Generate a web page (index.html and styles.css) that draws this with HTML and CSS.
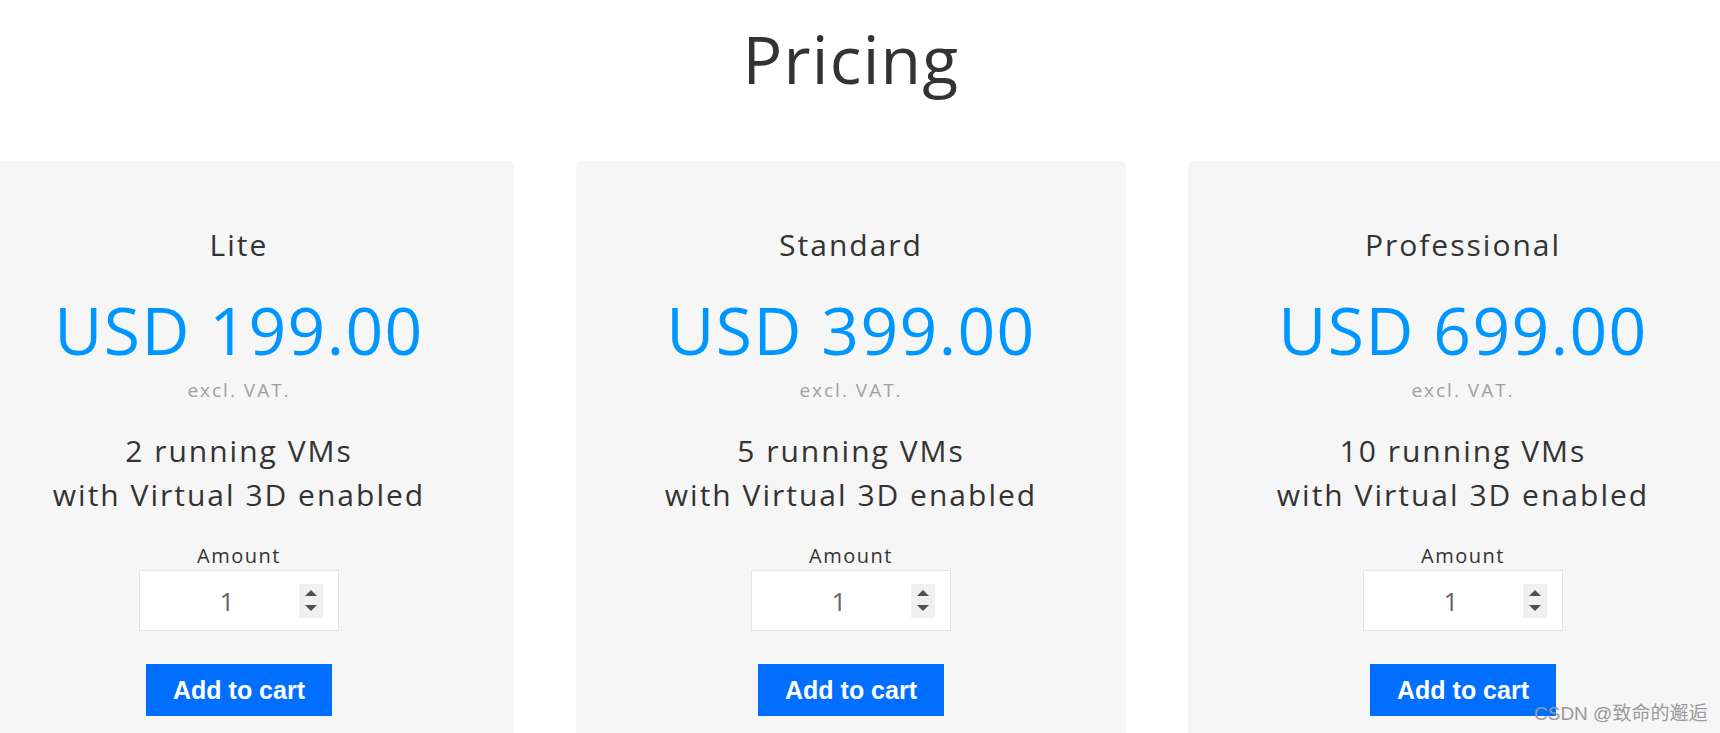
FILE: index.html
```html
<!DOCTYPE html>
<html lang="en">
<head>
<meta charset="utf-8">
<title>Pricing</title>
<link rel="stylesheet" href="styles.css">
</head>
<body>
<div class="page">
  <h1 class="page-title">Pricing</h1>
  <div class="plans">
    <section class="plan">
      <h2 class="plan-name">Lite</h2>
      <div class="plan-price">USD 199.00</div>
      <div class="plan-vat">excl. VAT.</div>
      <p class="plan-features">2 running VMs<br>with Virtual 3D enabled</p>
      <label class="amount-label">Amount</label>
      <div class="qty">
        <input class="qty-input" type="text" value="1">
        <span class="spin"><span class="tri tri-up"></span><span class="tri tri-down"></span></span>
      </div>
      <button class="cart-btn" type="button">Add to cart</button>
    </section>
    <section class="plan">
      <h2 class="plan-name">Standard</h2>
      <div class="plan-price">USD 399.00</div>
      <div class="plan-vat">excl. VAT.</div>
      <p class="plan-features">5 running VMs<br>with Virtual 3D enabled</p>
      <label class="amount-label">Amount</label>
      <div class="qty">
        <input class="qty-input" type="text" value="1">
        <span class="spin"><span class="tri tri-up"></span><span class="tri tri-down"></span></span>
      </div>
      <button class="cart-btn" type="button">Add to cart</button>
    </section>
    <section class="plan">
      <h2 class="plan-name">Professional</h2>
      <div class="plan-price">USD 699.00</div>
      <div class="plan-vat">excl. VAT.</div>
      <p class="plan-features">10 running VMs<br>with Virtual 3D enabled</p>
      <label class="amount-label">Amount</label>
      <div class="qty">
        <input class="qty-input" type="text" value="1">
        <span class="spin"><span class="tri tri-up"></span><span class="tri tri-down"></span></span>
      </div>
      <button class="cart-btn" type="button">Add to cart</button>
    </section>
  </div>
</div>
<div class="watermark">CSDN @致命的邂逅</div>
</body>
</html>
```

FILE: styles.css
```css
html, body {
  margin: 0;
  padding: 0;
  background: #ffffff;
}
body {
  height: 733px;
  overflow: hidden;
  position: relative;
  font-family: "Open Sans", "Noto Sans", sans-serif;
  color: #333333;
}
.page {
  width: 1702px;
  padding-top: 13px;
  text-align: center;
}
.page-title {
  margin: 0;
  font-size: 66px;
  font-weight: 400;
  line-height: 90px;
  letter-spacing: 1.3px;
  color: #333333;
}
.plans {
  display: flex;
  justify-content: center;
  gap: 62px;
  margin-top: 58px;
}
.plan {
  flex: 0 0 550px;
  width: 550px;
  background: #f6f6f6;
  border-radius: 5px;
  padding: 64px 0 80px;
  display: flex;
  flex-direction: column;
  align-items: center;
}
.plan-name {
  margin: 0;
  font-size: 30px;
  font-weight: 400;
  line-height: 40px;
  letter-spacing: 2px;
  color: #333333;
}
.plan-price {
  margin-top: 24px;
  font-size: 66px;
  line-height: 80px;
  letter-spacing: 1.4px;
  color: #0096ff;
}
.plan-vat {
  margin-top: 8px;
  font-size: 19px;
  line-height: 26px;
  letter-spacing: 2px;
  color: #a0a0a0;
}
.plan-features {
  margin: 26px 0 0;
  font-size: 30px;
  line-height: 44px;
  letter-spacing: 2px;
  color: #333333;
}
.amount-label {
  margin-top: 26px;
  font-size: 20px;
  line-height: 26px;
  letter-spacing: 1.5px;
  color: #333333;
}
.qty {
  margin-top: 1px;
  box-sizing: border-box;
  width: 200px;
  height: 61px;
  border: 1px solid #e3e3e3;
  background: #ffffff;
  display: flex;
  align-items: center;
  padding: 0 15px;
}
.qty-input {
  flex: 1 1 auto;
  min-width: 0;
  width: 0;
  border: none;
  outline: none;
  background: transparent;
  padding: 0;
  text-align: center;
  font-family: "Open Sans", sans-serif;
  font-size: 26px;
  color: #666666;
}
.spin {
  flex: 0 0 24px;
  width: 24px;
  height: 34px;
  background: #f0f0f0;
  display: flex;
  flex-direction: column;
  align-items: center;
  justify-content: center;
  gap: 9px;
}
.tri {
  width: 0;
  height: 0;
  border-left: 6px solid transparent;
  border-right: 6px solid transparent;
}
.tri-up {
  border-bottom: 6px solid #505050;
}
.tri-down {
  border-top: 6px solid #505050;
}
.cart-btn {
  margin-top: 33px;
  height: 52px;
  padding: 0 27px;
  border: none;
  border-radius: 0;
  background: #006fff;
  color: #ffffff;
  font-family: "Liberation Sans", Arial, sans-serif;
  font-weight: 700;
  font-size: 25px;
  line-height: 52px;
}
.watermark {
  position: absolute;
  left: 1534px;
  top: 702px;
  font-family: "Liberation Sans", "Noto Sans CJK SC", sans-serif;
  font-size: 19px;
  line-height: 24px;
  color: #9a9a9a;
  white-space: nowrap;
}
```
